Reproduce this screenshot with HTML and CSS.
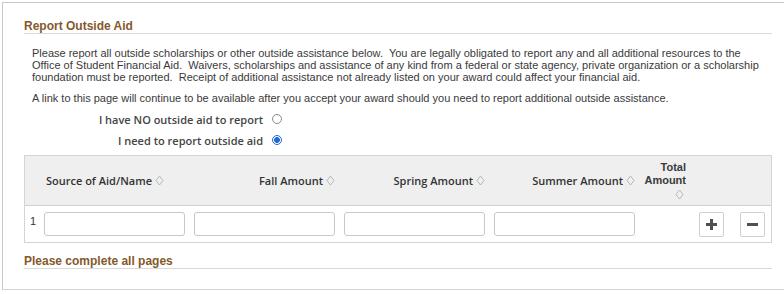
FILE: index.html
```html
<!DOCTYPE html>
<html lang="en">
<head>
    <meta charset="UTF-8">
    <meta name="viewport" content="width=device-width, initial-scale=1.0">
    <title>Report Outside Aid</title>
    <link rel="stylesheet" href="styles.css">
</head>
<body>
    <div class="frame">
        <h2 class="group-title">Report Outside Aid</h2>

        <div class="instructions">
            <p>
                Please report all outside scholarships or other outside assistance below.&nbsp; You are legally obligated to report any and all additional resources to the<br>
                Office of Student Financial Aid.&nbsp; Waivers, scholarships and assistance of any kind from a federal or state agency, private organization or a scholarship<br>
                foundation must be reported.&nbsp; Receipt of additional assistance not already listed on your award could affect your financial aid.
            </p>
            <p>A link to this page will continue to be available after you accept your award should you need to report additional outside assistance.</p>
        </div>

        <div class="choices">
            <label class="choice">
                <span class="choice-label">I have NO outside aid to report</span>
                <span class="radio"></span>
            </label>
            <label class="choice">
                <span class="choice-label">I need to report outside aid</span>
                <span class="radio checked"></span>
            </label>
        </div>

        <div class="grid">
            <div class="grid-row grid-head">
                <div class="cell"></div>
                <div class="cell head-left">Source of Aid/Name <span class="sort"></span></div>
                <div class="cell head-right">Fall Amount <span class="sort"></span></div>
                <div class="cell head-right">Spring Amount <span class="sort"></span></div>
                <div class="cell head-right">Summer Amount <span class="sort"></span></div>
                <div class="cell head-total">Total<br>Amount<br><span class="sort"></span></div>
                <div class="cell"></div>
                <div class="cell"></div>
            </div>
            <div class="grid-row grid-body">
                <div class="cell row-num">1</div>
                <div class="cell"><input class="field" type="text"></div>
                <div class="cell"><input class="field" type="text"></div>
                <div class="cell"><input class="field" type="text"></div>
                <div class="cell"><input class="field" type="text"></div>
                <div class="cell"></div>
                <div class="cell"><button class="row-btn" type="button"><span class="plus"></span></button></div>
                <div class="cell"><button class="row-btn" type="button"><span class="minus"></span></button></div>
            </div>
        </div>

        <h2 class="group-title footer-title">Please complete all pages</h2>
    </div>
</body>
</html>
```

FILE: styles.css
```css
body, html {
    margin: 0;
    padding: 0;
    background-color: #fff;
    font-family: "Liberation Sans", Arial, sans-serif;
    color: #333;
    overflow: hidden;
}

.frame {
    box-sizing: border-box;
    height: 288px;
    margin: 2px 0 0 2px;
    padding: 16px 12px 0 21px;
    border-top: 1px solid #c9c9c9;
    border-left: 1px solid #c9c9c9;
    border-bottom: 1px solid #d4d4d4;
}

.group-title {
    margin: 0;
    font-size: 12px;
    line-height: 14px;
    font-weight: bold;
    color: #84592b;
    border-bottom: 1px solid #d9d9d9;
}

.instructions {
    padding: 0 8px;
    font-size: 11px;
    line-height: 12px;
    color: #3a3a3a;
}

.instructions p {
    margin: 13px 0 0;
}

.instructions p + p {
    margin-top: 9px;
}

.choices {
    display: flex;
    flex-direction: column;
    gap: 7px;
    margin-top: 8px;
    width: 258px;
}

.choice {
    display: flex;
    justify-content: flex-end;
    align-items: center;
    gap: 9px;
    height: 14px;
    font-family: "Open Sans", sans-serif;
    font-weight: 600;
    font-size: 11px;
    color: #444;
}

.radio {
    box-sizing: border-box;
    width: 10px;
    height: 10px;
    border: 1px solid #8c8c8c;
    border-radius: 50%;
    background: #fff;
}

.radio.checked {
    border-color: #2169d4;
    background: radial-gradient(circle, #2169d4 0 2.6px, #fff 3.2px);
}

.grid {
    margin-top: 8px;
    border: 1px solid #d4d4d4;
}

.grid-row {
    display: grid;
    grid-template-columns: 19px 150px 150px 150px 150px 55px 41px 31px;
}

.grid-head {
    height: 49px;
    background-color: #efefef;
    border-bottom: 1px solid #d0d0d0;
    font-family: "Open Sans", sans-serif;
    font-weight: 600;
    font-size: 11px;
    color: #333;
}

.grid-head .cell {
    display: flex;
    align-items: center;
}

.head-left {
    padding-left: 2px;
}

.head-right {
    justify-content: flex-end;
    padding-right: 9px;
}

.grid-head .head-total {
    display: block;
    align-self: center;
    text-align: right;
    padding-right: 13px;
    font-family: "Liberation Sans", Arial, sans-serif;
    font-weight: bold;
    color: #3a3a3a;
    line-height: 13px;
}

.sort {
    display: inline-block;
    width: 7px;
    height: 7px;
    margin-left: 3px;
    border: 1px solid #a8a8a8;
    transform: scale(0.62, 0.8) rotate(45deg);
    vertical-align: middle;
}

.head-total .sort {
    margin: 0 2px 0 0;
}

.grid-body {
    height: 36px;
    align-items: center;
}

.row-num {
    padding-left: 5px;
    font-size: 11px;
    padding-bottom: 6px;
}

.field {
    box-sizing: border-box;
    display: block;
    width: 141px;
    height: 24px;
    margin: 0;
    border: 1px solid #c8c8c8;
    border-radius: 3px;
    background: #fff;
}

.row-btn {
    position: relative;
    box-sizing: border-box;
    display: block;
    width: 25px;
    height: 25px;
    padding: 0;
    border: 1px solid #cfcfcf;
    border-radius: 2px;
    background: #fff;
}

.plus,
.minus {
    position: absolute;
    left: 6px;
    top: 10px;
    width: 11px;
    height: 3px;
    background: #505050;
}

.plus::after {
    content: "";
    position: absolute;
    left: 4px;
    top: -4px;
    width: 3px;
    height: 11px;
    background: #505050;
}

.footer-title {
    margin-top: 11px;
}
```
